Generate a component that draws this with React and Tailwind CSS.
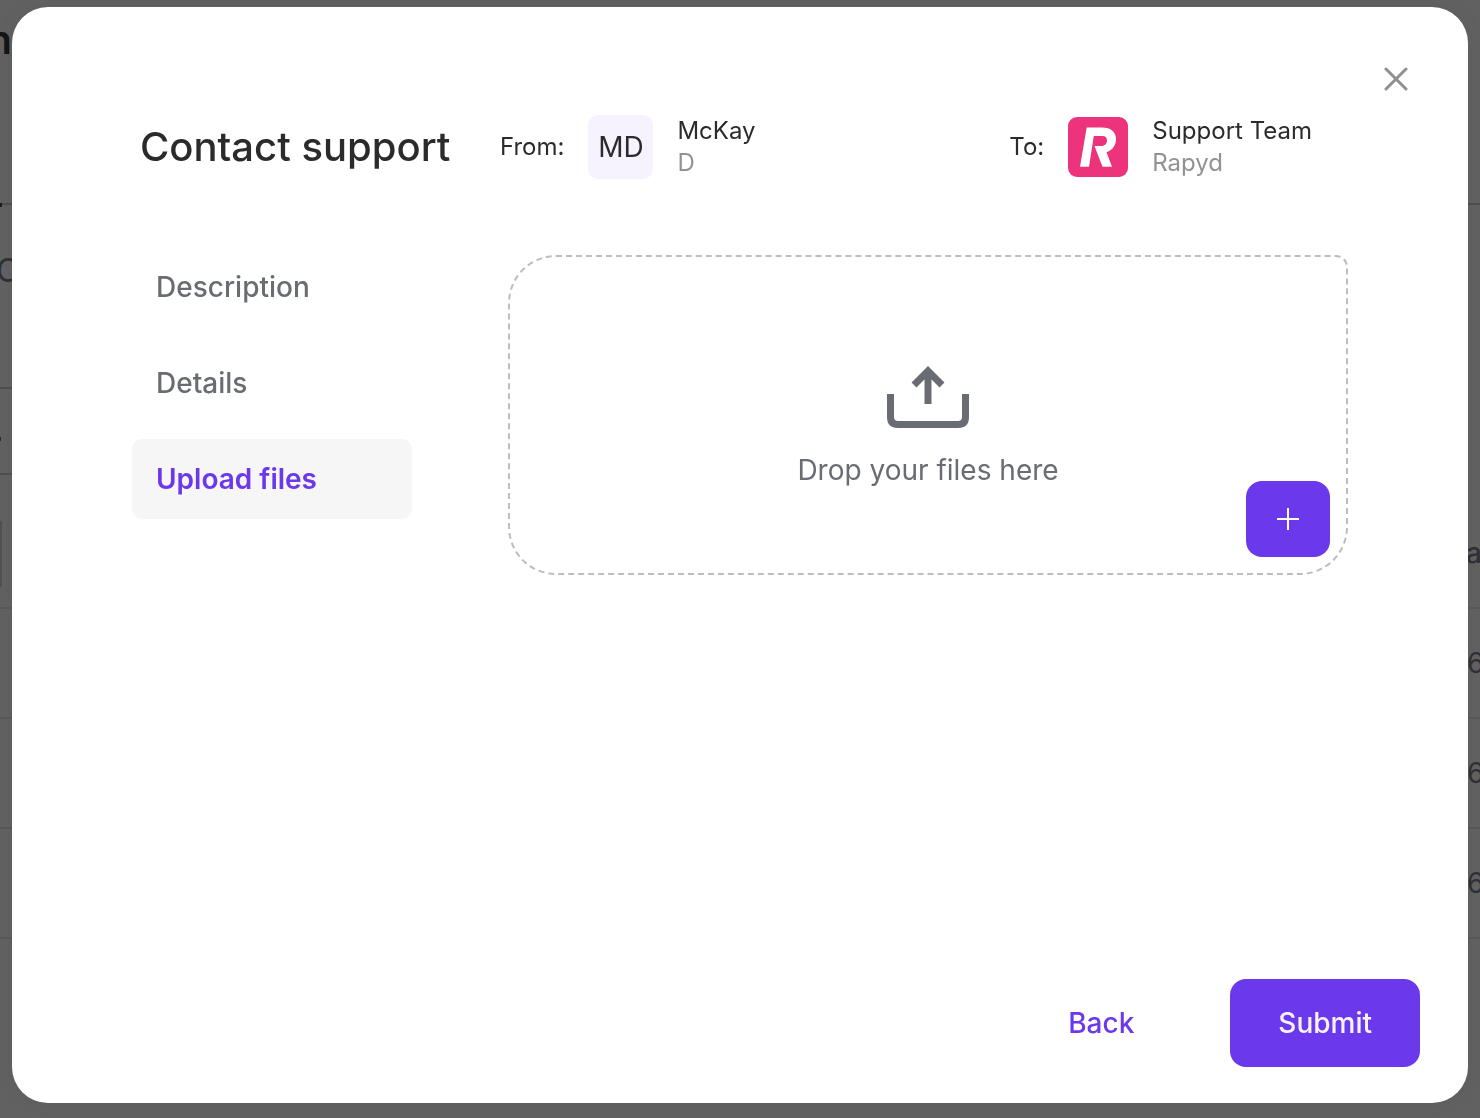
import React from "react";

const steps = ["Description", "Details", "Upload files"];
const rows = ["6", "6", "6"];

function PageBehind() {
  return (
    <div aria-hidden="true" className="flex min-h-screen justify-between bg-[#616161] text-[#303035]">
      <div className="w-3 overflow-hidden">
        <div className="relative flex h-[205px] items-start justify-end border-b-2 border-[#4d4d4d] pt-4 text-[40px] leading-12 font-semibold text-[#151515]">
          Admin
          <span className="absolute -bottom-1 left-0 h-1 w-0.5 bg-[#1c1c1c]" />
        </div>
        <div className="h-[184px] border-b-2 border-[#4f4f4f] pt-12 text-[32px] leading-9">
          <span className="-ml-1">C</span>
        </div>
        <div className="h-[86px] border-b-2 border-[#4f4f4f] pt-12">
          <div className="h-1 w-px bg-[#2b2b2b]" />
        </div>
        <div className="h-[134px] border-b-2 border-[#595959] pt-[46px]">
          <div className="h-[66px] w-0.5 bg-[#515151]" />
        </div>
        {rows.map((_, i) => (
          <div key={i} className="h-[110px] border-b-2 border-[#595959]" />
        ))}
      </div>

      <div className="w-3 overflow-hidden text-[28px] leading-9">
        <div className="h-[205px] border-b-2 border-[#4d4d4d]" />
        <div className="flex h-[404px] items-end border-b-2 border-[#595959] pb-9 font-medium">
          <span className="-ml-0.5">a</span>
        </div>
        {rows.map((value, i) => (
          <div key={i} className="flex h-[110px] items-center border-b-2 border-[#595959]">
            <span className="-ml-px">{value}</span>
          </div>
        ))}
      </div>
    </div>
  );
}

function RapydLogo() {
  return (
    <svg viewBox="0 0 60 60" className="size-15 shrink-0" role="img" aria-label="Rapyd">
      <rect width="60" height="60" rx="9" fill="#ec337b" />
      <path
        d="M18.7 10.5H34C43 10.5 48 15 48 22C48 28 45 33 38.5 35.3L44 49.8H34.5L26.5 29H33C37 29 39 26.5 39 23.2C39 20.5 37.3 19 34.5 19H25.8L21 49.8H12Z"
        fill="#fff"
      />
    </svg>
  );
}

function UploadIcon() {
  return (
    <svg viewBox="0 0 82 62" className="h-[62px] w-[82px]" fill="none" stroke="#6a6c74" strokeWidth="7">
      <path d="M3.5 28V51Q3.5 58.5 11 58.5H71Q78.5 58.5 78.5 51V28" />
      <path d="M41 38V5" />
      <path d="M27 19L41 5L55 19" />
    </svg>
  );
}

function Contact({ label, name, detail, children }) {
  return (
    <div className="flex items-center gap-6 text-2xl leading-8 text-[#2b2b2b]">
      <span>{label}</span>
      {children}
      <div>
        <p>{name}</p>
        <p className="text-[#929292]">{detail}</p>
      </div>
    </div>
  );
}

export default function App() {
  return (
    <div className="font-['Inter',sans-serif]">
      <PageBehind />

      <div className="fixed inset-0 flex px-3 pt-[7px] pb-[15px]">
        <div
          role="dialog"
          aria-labelledby="dialog-title"
          className="flex flex-1 flex-col rounded-[36px] bg-white pt-12 pr-12 pb-9 pl-[120px] shadow-[0_0_24px_rgba(0,0,0,0.04)]"
        >
          <button aria-label="Close" className="flex size-12 items-center justify-center self-end">
            <svg viewBox="0 0 24 24" className="size-6" stroke="#8f8f8f" strokeWidth="3" strokeLinecap="round">
              <path d="M2 2L22 22M22 2L2 22" />
            </svg>
          </button>

          <header className="mt-3 mr-[108px] flex h-16 items-center justify-between">
            <div className="flex items-center">
              <h1 id="dialog-title" className="w-[368px] pl-2 text-[40px] leading-12 font-medium text-[#2b2b2b]">
                Contact support
              </h1>
              <Contact label="From:" name="McKay" detail="D">
                <span className="flex h-16 w-[65px] items-center justify-center rounded-[10px] bg-[#f6f3fe] text-[28px]">
                  MD
                </span>
              </Contact>
            </div>
            <Contact label="To:" name="Support Team" detail="Rapyd">
              <RapydLogo />
            </Contact>
          </header>

          <div className="mt-[68px] mr-[72px] flex flex-1 items-start gap-24">
            <nav className="flex w-[280px] flex-col gap-4">
              {steps.map((step) => (
                <a
                  key={step}
                  href="#"
                  className={
                    step === "Upload files"
                      ? "flex h-20 items-center rounded-[10px] bg-[#f6f6f6] px-6 text-[28px] font-semibold text-[#6b38eb]"
                      : "flex h-20 items-center rounded-[10px] px-6 text-[28px] font-medium text-[#6a6c74]"
                  }
                >
                  {step}
                </a>
              ))}
            </nav>

            <div className="relative mt-2 flex h-80 flex-1 flex-col items-center rounded-[48px] rounded-tr-xl border-2 border-dashed border-[#bdbdbf] pt-[109px]">
              <UploadIcon />
              <p className="mt-6 text-[28px] leading-9 text-[#6a6c74]">Drop your files here</p>
              <button
                aria-label="Add file"
                className="absolute right-4 bottom-4 flex h-[76px] w-[84px] items-center justify-center rounded-2xl bg-[#6b38eb]"
              >
                <svg viewBox="0 0 22 22" className="size-[22px]" stroke="#fff" strokeWidth="2">
                  <path d="M11 0V22M0 11H22" />
                </svg>
              </button>
            </div>
          </div>

          <footer className="flex items-center justify-end gap-12 text-[28px] font-medium">
            <button className="h-[88px] px-12 text-[#6b38eb]">Back</button>
            <button className="h-[88px] rounded-2xl bg-[#6b38eb] px-12 text-[#f6f3fe]">Submit</button>
          </footer>
        </div>
      </div>
    </div>
  );
}
